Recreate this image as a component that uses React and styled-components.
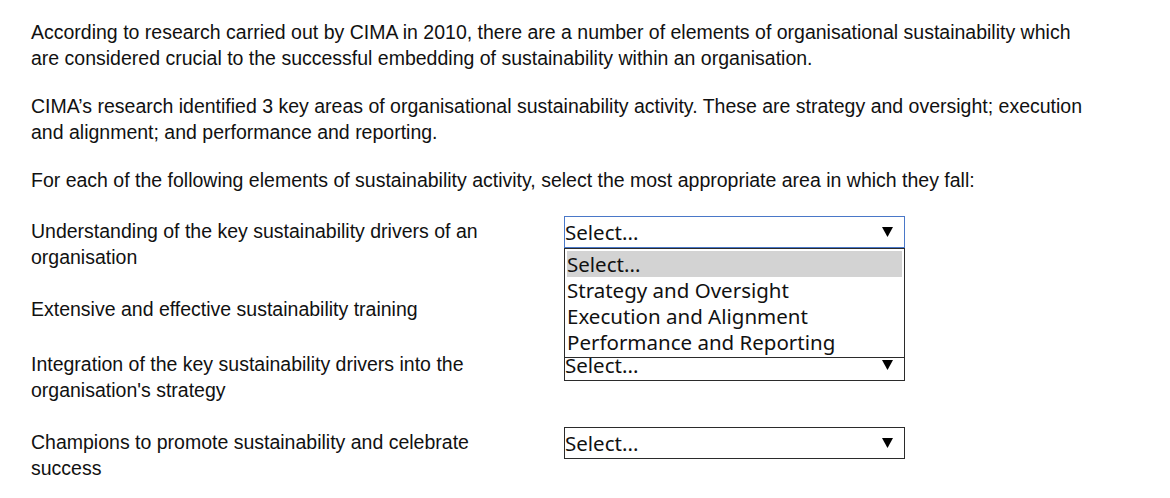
import React from "react";
import styled, { createGlobalStyle } from "styled-components";

const GlobalStyle = createGlobalStyle`
  html, body { margin: 0; padding: 0; background: #ffffff; }
  body { font-family: "Liberation Sans", Arial, sans-serif; color: #111; }
`;

const Page = styled.div`
  padding: 19px 0 0 31px;
  width: 1060px;
`;

const Para = styled.p`
  margin: 0 0 22px 0;
  font-size: 19.5px;
  line-height: 26px;
`;

const Rows = styled.div`
  display: grid;
  grid-template-columns: 533px 341px;
  row-gap: 23px;
  margin-top: 23px;
`;

const Label = styled.div`
  font-size: 19.5px;
  line-height: 26px;
  padding-top: 2px;
  padding-bottom: 1px;
  max-width: 480px;
`;

const SelectCell = styled.div`
  position: relative;
`;

const SelectBox = styled.div`
  box-sizing: border-box;
  height: 32px;
  width: 341px;
  border: 1px solid ${(p) => (p.$focused ? "#4a78c8" : "#2b2b2b")};
  background: #fff;
  display: flex;
  align-items: center;
  justify-content: space-between;
  padding: 0 11px 0 0;
  font-family: "Noto Sans", "Open Sans", sans-serif;
  font-size: 20.5px;
  color: #111;
`;

const Arrow = styled.svg`
  width: 11px;
  height: 10px;
  flex: none;
`;

const ListBox = styled.div`
  position: absolute;
  left: 0;
  top: 32px;
  z-index: 2;
  box-sizing: border-box;
  width: 341px;
  padding: 2px;
  border: 1px solid #2b2b2b;
  background: #fff;
  font-family: "Noto Sans", "Open Sans", sans-serif;
  font-size: 20.5px;
  color: #111;
`;

const Option = styled.div`
  height: 26px;
  line-height: 26px;
  background: ${(p) => (p.$active ? "#d3d3d3" : "transparent")};
  white-space: nowrap;
`;

const options = [
  "Select...",
  "Strategy and Oversight",
  "Execution and Alignment",
  "Performance and Reporting",
];

const items = [
  "Understanding of the key sustainability drivers of an organisation",
  "Extensive and effective sustainability training",
  "Integration of the key sustainability drivers into the organisation's strategy",
  "Champions to promote sustainability and celebrate success",
];

function Select({ open }) {
  return (
    <SelectCell>
      <SelectBox $focused={open}>
        <span>Select...</span>
        <Arrow viewBox="0 0 11 10">
          <polygon points="0,0 11,0 5.5,10" fill="#000" />
        </Arrow>
      </SelectBox>
      {open && (
        <ListBox>
          {options.map((o, i) => (
            <Option key={o} $active={i === 0}>
              {o}
            </Option>
          ))}
        </ListBox>
      )}
    </SelectCell>
  );
}

export default function App() {
  return (
    <>
      <GlobalStyle />
      <Page>
        <Para>
          According to research carried out by CIMA in 2010, there are a number of elements of
          organisational sustainability which are considered crucial to the successful embedding of
          sustainability within an organisation.
        </Para>
        <Para>
          CIMA’s research identified 3 key areas of organisational sustainability activity. These are
          strategy and oversight; execution and alignment; and performance and reporting.
        </Para>
        <Para style={{ marginBottom: 0 }}>
          For each of the following elements of sustainability activity, select the most appropriate
          area in which they fall:
        </Para>
        <Rows>
          {items.map((t, i) => (
            <React.Fragment key={t}>
              <Label>{t}</Label>
              <Select open={i === 0} />
            </React.Fragment>
          ))}
        </Rows>
      </Page>
    </>
  );
}
